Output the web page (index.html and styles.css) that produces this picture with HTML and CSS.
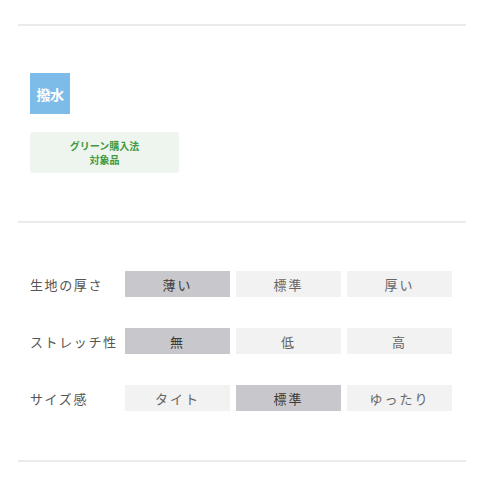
FILE: index.html
```html
<!DOCTYPE html>
<html lang="ja">
<head>
<meta charset="utf-8">
<link rel="stylesheet" href="styles.css">
</head>
<body>
<div class="wrap">
  <div class="rule"></div>
  <section class="tags">
    <div class="badge">撥水</div>
    <div class="green"><span>グリーン購入法</span><span>対象品</span></div>
  </section>
  <div class="rule"></div>
  <section class="specs">
    <div class="row">
      <div class="label">生地の厚さ</div>
      <div class="opts">
        <div class="opt on">薄い</div>
        <div class="opt">標準</div>
        <div class="opt">厚い</div>
      </div>
    </div>
    <div class="row">
      <div class="label">ストレッチ性</div>
      <div class="opts">
        <div class="opt on">無</div>
        <div class="opt">低</div>
        <div class="opt">高</div>
      </div>
    </div>
    <div class="row">
      <div class="label">サイズ感</div>
      <div class="opts">
        <div class="opt">タイト</div>
        <div class="opt on">標準</div>
        <div class="opt">ゆったり</div>
      </div>
    </div>
  </section>
  <div class="rule"></div>
</div>
</body>
</html>
```
FILE: styles.css
```css
html, body {
  margin: 0;
  padding: 0;
  background: #fff;
}
body {
  font-family: "Noto Sans CJK JP", "Noto Sans", sans-serif;
  color: #555;
}
.wrap {
  padding: 24px 14px 0 18px;
}
.rule {
  height: 2px;
  background: #ebebeb;
}
.tags {
  padding: 47px 12px 48px;
  display: flex;
  flex-direction: column;
  align-items: flex-start;
  gap: 18px;
}
.badge {
  width: 40px;
  height: 41px;
  background: #7dbbe9;
  color: #fff;
  font-weight: 700;
  font-size: 14px;
  display: flex;
  align-items: center;
  justify-content: center;
  letter-spacing: -0.5px;
}
.green {
  width: 149px;
  height: 41px;
  box-sizing: border-box;
  background: #eef4ee;
  border-radius: 3px;
  color: #3f9a3f;
  font-size: 10px;
  font-weight: 700;
  line-height: 14px;
  text-align: center;
  display: flex;
  flex-direction: column;
  align-items: center;
  justify-content: center;
}
.specs {
  padding: 48px 12px 49px;
  display: flex;
  flex-direction: column;
  gap: 31px;
}
.row {
  display: flex;
  align-items: center;
}
.label {
  width: 95px;
  font-size: 13px;
  letter-spacing: 1.6px;
  color: #555;
  white-space: nowrap;
}
.opts {
  display: flex;
  gap: 6px;
}
.opt {
  width: 105px;
  height: 26px;
  background: #f2f2f2;
  color: #666;
  font-size: 13px;
  letter-spacing: 2px;
  display: flex;
  align-items: center;
  justify-content: center;
}
.opt.on {
  background: #c8c8cc;
  color: #3a3a3a;
}
```
